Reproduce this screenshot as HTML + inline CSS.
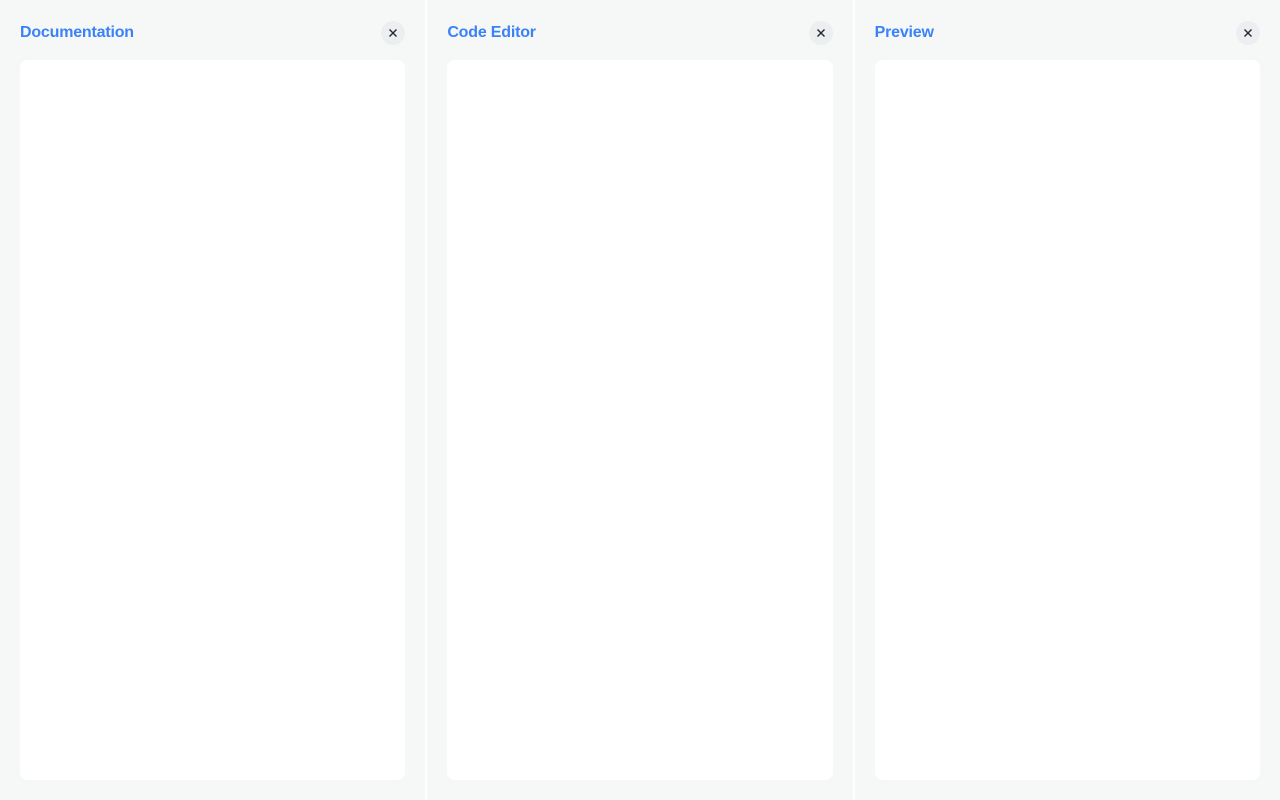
<!DOCTYPE html>
<html><head><style>
html,body{margin:0;width:1280px;height:800px;background:#f6f8f8;font-family:"Liberation Sans",sans-serif;overflow:hidden}
.wrap{display:flex;height:800px}
.p{flex:1;position:relative;border-right:2px solid #fdfefe;box-sizing:border-box}
.p:last-child{border-right:none}
.t{position:absolute;left:20px;top:23px;font-size:16px;font-weight:600;color:#3b82f6;line-height:20px;letter-spacing:-0.2px}
.x{position:absolute;right:20px;top:21px;width:24px;height:24px;border-radius:50%;background:#eceef0}
.x svg{position:absolute;left:7px;top:7px}
.b{position:absolute;left:20px;right:20px;top:60px;bottom:20px;background:#fff;border-radius:8px}
</style></head><body><div class="wrap">
<div class="p"><div class="t">Documentation</div><div class="x"><svg width="10" height="10" viewBox="0 0 10 10"><path d="M1.5 1.5L8.5 8.5M8.5 1.5L1.5 8.5" stroke="#1f2937" stroke-width="1.4"/></svg></div><div class="b"></div></div>
<div class="p"><div class="t">Code Editor</div><div class="x"><svg width="10" height="10" viewBox="0 0 10 10"><path d="M1.5 1.5L8.5 8.5M8.5 1.5L1.5 8.5" stroke="#1f2937" stroke-width="1.4"/></svg></div><div class="b"></div></div>
<div class="p"><div class="t">Preview</div><div class="x"><svg width="10" height="10" viewBox="0 0 10 10"><path d="M1.5 1.5L8.5 8.5M8.5 1.5L1.5 8.5" stroke="#1f2937" stroke-width="1.4"/></svg></div><div class="b"></div></div>
</div></body></html>
